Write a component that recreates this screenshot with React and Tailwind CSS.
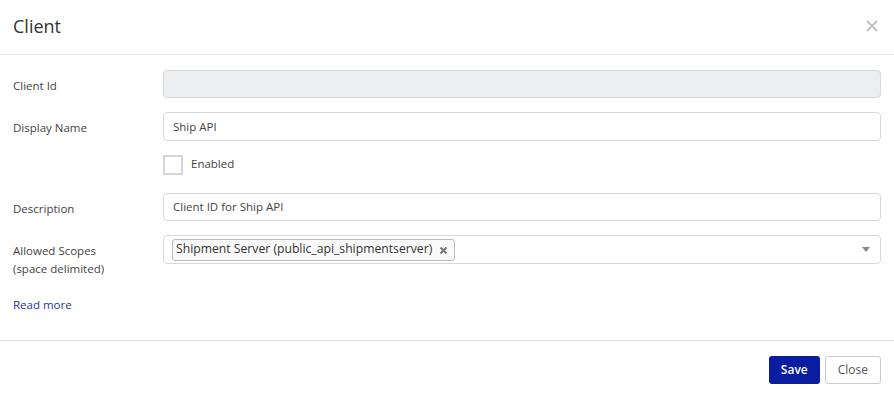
export default function App() {
  return (
    <div className="w-[894px] h-[399px] bg-white text-[#333] font-['Open_Sans',sans-serif] flex flex-col">
      <header className="h-[55px] border-b border-[#e5e5e5] flex items-center justify-between pl-[13px] pr-[15px]">
        <h1 className="text-[18px] leading-none text-[#333] -mt-[3px]">Client</h1>
        <button className="-mt-[3px]" aria-label="Close">
          <svg width="14" height="14" viewBox="0 0 14 14">
            <path d="M2 2 L12 12 M12 2 L2 12" stroke="#c0c0c0" strokeWidth="1.8" />
          </svg>
        </button>
      </header>

      <div className="flex-1 px-[13px] pt-[15px] text-[11.5px]">
        <div className="flex mb-[14px]">
          <label className="w-[150px] pt-[7px] leading-[18px] text-[#444]">Client Id</label>
          <div className="flex-1 h-[28px] rounded-[4px] border border-[#d8d8d8] bg-[#eceeef]" />
        </div>

        <div className="flex mb-[14px]">
          <label className="w-[150px] pt-[7px] leading-[18px] text-[#444]">Display Name</label>
          <div className="flex-1 h-[29px] rounded-[4px] border border-[#d8d8d8] flex items-center px-[9px] text-[#444]">Ship API</div>
        </div>

        <div className="flex mb-[18px]">
          <div className="w-[150px]" />
          <div className="flex items-center gap-[8px]">
            <span className="w-[20px] h-[20px] border-2 border-[#d6d6d6] bg-white" />
            <span className="text-[#444] -mt-[2px]">Enabled</span>
          </div>
        </div>

        <div className="flex mb-[14px]">
          <label className="w-[150px] pt-[7px] leading-[18px] text-[#444]">Description</label>
          <div className="flex-1 h-[28px] rounded-[4px] border border-[#d8d8d8] flex items-center px-[9px] text-[#444]">Client ID for Ship API</div>
        </div>

        <div className="flex h-[43px]">
          <label className="w-[150px] pt-[7px] leading-[18px] text-[#444]">Allowed Scopes<br />(space delimited)</label>
          <div className="flex-1 h-[29px] rounded-[4px] border border-[#d8d8d8] flex items-center pl-[8px] pr-[10px]">
            <span className="h-[22px] flex items-center gap-[7px] border border-[#bbb] rounded-[3px] bg-[#fafafa] pl-[3px] pr-[6px] text-[12.2px] text-[#333]">
              Shipment Server (public_api_shipmentserver)
              <svg width="9" height="9" viewBox="0 0 9 9" className="mt-[1px]">
                <path d="M1.5 1.5 L7.5 7.5 M7.5 1.5 L1.5 7.5" stroke="#777" strokeWidth="2" />
              </svg>
            </span>
            <span className="ml-auto w-0 h-0 border-l-[4px] border-r-[4px] border-t-[5px] border-l-transparent border-r-transparent border-t-[#888]" />
          </div>
        </div>

        <a href="#" className="block mt-[18px] leading-[18px] text-[#2233b5]">Read more</a>
      </div>

      <footer className="h-[59px] border-t border-[#e5e5e5] flex items-center justify-end gap-[5px] pr-[13px] text-[12px]">
        <button className="h-[28px] px-[12px] rounded-[3px] bg-[#0a1c9f] text-white font-semibold">Save</button>
        <button className="h-[28px] px-[12px] rounded-[3px] border border-[#ccc] bg-white text-[#555]">Close</button>
      </footer>
    </div>
  );
}
